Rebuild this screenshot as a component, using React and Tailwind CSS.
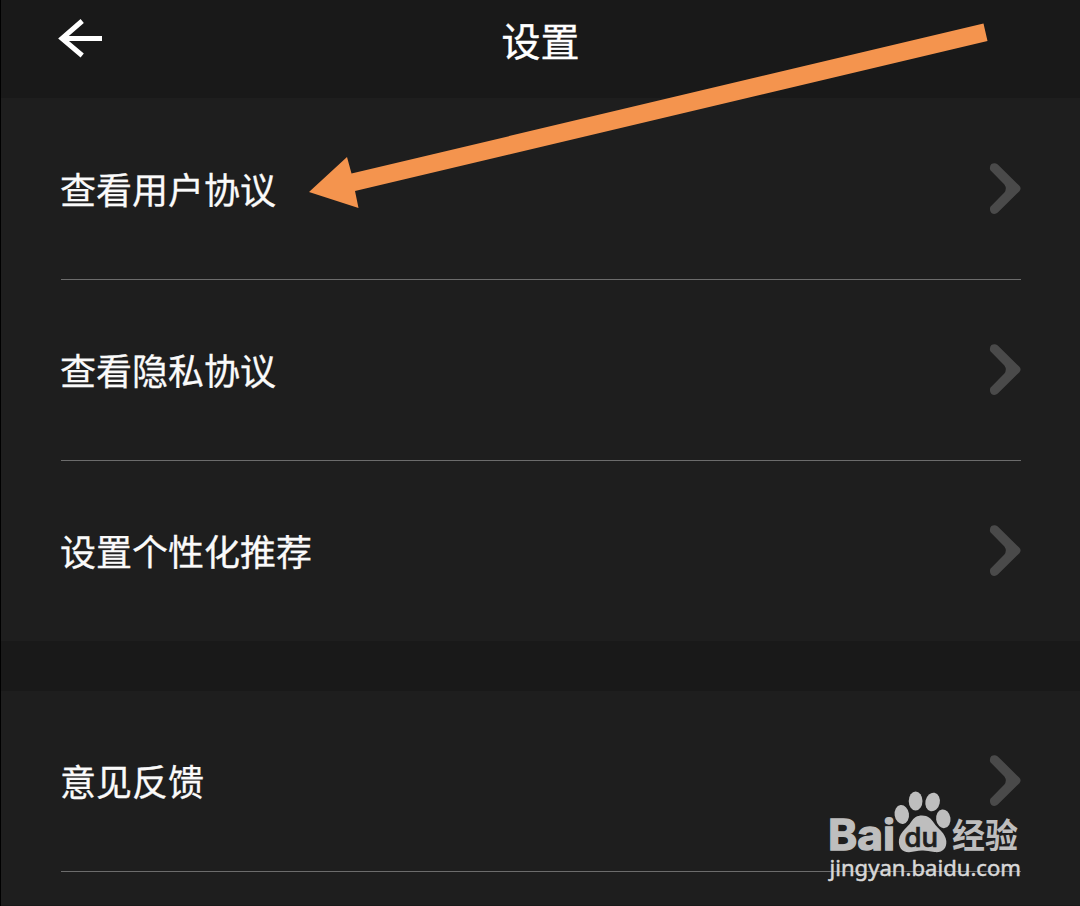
const GROUPS = [
  ['查看用户协议', '查看隐私协议', '设置个性化推荐'],
  ['意见反馈'],
];

function BackIcon() {
  return (
    <svg className="block h-[44px] w-[48px]" viewBox="0 0 48 44" fill="none" stroke="#ffffff" strokeWidth="5">
      <path d="M26.2 5 L6 22.5 L26.2 39.5" strokeLinejoin="miter" />
      <path d="M7 22.5 H46" />
    </svg>
  );
}

function Chevron() {
  return (
    <svg className="block h-[52px] w-[32px] shrink-0" viewBox="0 0 32 52" fill="#4a4a4a">
      <path d="M8.8 1.4 L30.4 22.8 Q32.8 25.5 30.4 28.2 L8.8 49.6 Q5.6 52 2.4 49.9 Q0 47 1.4 43.8 L15.4 29.5 Q18.2 25.5 15.4 21.5 L1.4 7.2 Q0 4 2.4 1.1 Q5.6 -.8 8.8 1.4 Z" />
    </svg>
  );
}

function Row({ label, divided }) {
  return (
    <div className={divided ? 'flex h-[181px] items-center justify-between border-b border-[#6c6c6c]' : 'flex h-[180px] items-center justify-between'}>
      <span className="-ml-px pb-[2px] text-[36px] leading-[52px] text-[#fafafa] [-webkit-text-stroke:0.3px_#fafafa]">{label}</span>
      <Chevron />
    </div>
  );
}

function Watermark() {
  return (
    <svg className="absolute left-[819px] top-[785px] h-[105px] w-[210px]" viewBox="820 785 210 105" fill="#bebebe">
      <text x="828" y="850" textLength="67" lengthAdjust="spacingAndGlyphs" fontSize="42" fontWeight="700" stroke="#bebebe" strokeWidth="1.4" className="font-['Inter',sans-serif]">Bai</text>
      <ellipse cx="901.8" cy="814.5" rx="7.2" ry="9.5" transform="rotate(-8 901.8 814.5)" />
      <ellipse cx="915.6" cy="801" rx="6.9" ry="9.6" />
      <ellipse cx="932.6" cy="802" rx="7.2" ry="9.4" transform="rotate(12 932.6 802)" />
      <ellipse cx="943.3" cy="818.8" rx="7.2" ry="9.4" transform="rotate(-8 943.3 818.8)" />
      <path d="M922 815.5 C928 815.5 931.5 819 934 823 C938 829 945.5 833 946.3 841 C947 849 941.5 853 934.5 852 C929 851.2 926 850.3 922 850.5 C917 850.5 914 852 909 852.2 C902 852.3 898 847 899 839.5 C900 832 908 827 911 822 C914 817.5 917 815.5 922 815.5 Z" />
      <text x="904.5" y="846.5" textLength="33.5" lengthAdjust="spacingAndGlyphs" fontSize="27" fontWeight="500" fill="#1e1e1e" stroke="#1e1e1e" strokeWidth=".7" className="font-['Inter',sans-serif]">du</text>
      <text x="952" y="847.5" textLength="66" lengthAdjust="spacingAndGlyphs" fontSize="34" fontWeight="700" className="font-['Noto_Sans_CJK_SC',sans-serif]">经验</text>
      <text x="829.5" y="876" textLength="191.5" lengthAdjust="spacingAndGlyphs" fontSize="22.5" fill="#d8d8d8" stroke="#d8d8d8" strokeWidth=".5" className="font-['Noto_Sans',sans-serif]">jingyan.baidu.com</text>
    </svg>
  );
}

export default function App() {
  return (
    <div className="relative h-[906px] w-[1080px] overflow-hidden border-l border-black bg-[#191919] font-['Noto_Sans_CJK_SC',sans-serif]">
      <header className="grid h-[98px] grid-cols-3 items-start px-[55px] pt-[13px]">
        <div className="pt-[3px]">
          <BackIcon />
        </div>
        <h1 className="text-center text-[39px] leading-[52px] text-white [-webkit-text-stroke:0.4px_#ffffff]">设置</h1>
      </header>
      <main className="flex flex-col gap-[50px]">
        {GROUPS.map((labels, group) => (
          <section key={group} className={group === 0 ? 'bg-[#1e1e1e] pt-[1px] pr-[59px] pl-[60px]' : 'h-[214px] bg-[#1e1e1e] pr-[59px] pl-[60px]'}>
            {labels.map((label, index) => (
              <Row key={label} label={label} divided={group === 1 || index < labels.length - 1} />
            ))}
          </section>
        ))}
      </main>
      <svg className="pointer-events-none absolute left-[299px] top-[15px] h-[200px] w-[700px]" viewBox="300 15 700 200" fill="#f4944e">
        <path d="M309 192 L347 157 L351.5 173.5 L983.5 23.5 L987.5 41 L355 191 L358.5 208 Z" />
      </svg>
      <Watermark />
    </div>
  );
}
